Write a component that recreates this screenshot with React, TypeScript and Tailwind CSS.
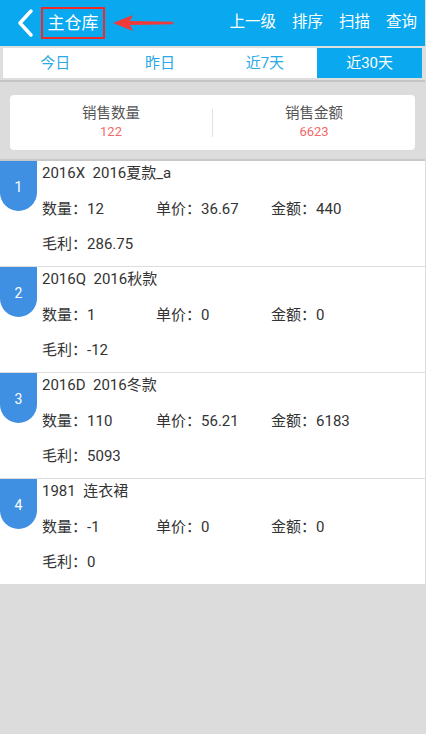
import React from "react";

const items = [
  { n: "1", title: "2016X  2016夏款_a", qty: "12", price: "36.67", amt: "440", profit: "286.75" },
  { n: "2", title: "2016Q  2016秋款", qty: "1", price: "0", amt: "0", profit: "-12" },
  { n: "3", title: "2016D  2016冬款", qty: "110", price: "56.21", amt: "6183", profit: "5093" },
  { n: "4", title: "1981  连衣裙", qty: "-1", price: "0", amt: "0", profit: "0" },
];

const font = { fontFamily: 'Roboto, "Noto Sans CJK SC", sans-serif' };

export default function App() {
  return (
    <div className="w-[426px] h-[734px] bg-[#dcdcdc] overflow-hidden" style={font}>
      <div className="w-[425px] h-full bg-[#dcdcdc] flex flex-col">
        {/* Header */}
        <div className="h-[46px] bg-[#0aa8ee] flex items-center relative">
          <svg width="20" height="30" viewBox="0 0 20 30" className="ml-[15px]">
            <polyline points="16,3 5,15 16,27" fill="none" stroke="white" strokeWidth="3.5" strokeLinecap="round" strokeLinejoin="round" />
          </svg>
          <div className="ml-[6px] w-[64px] h-[32px] border-2 border-[#ee2b2b] flex items-center justify-center text-white text-[17px] leading-none">
            主仓库
          </div>
          <svg width="62" height="18" viewBox="0 0 62 18" className="ml-[8px]">
            <polygon points="0,9 20,1 17,7 60,7.8 60,10.2 17,11 20,17" fill="#f03a3a" />
          </svg>
          <div className="ml-auto mr-[8px] flex items-center gap-[16px] text-white text-[15.5px]">
            <span>上一级</span>
            <span>排序</span>
            <span>扫描</span>
            <span>查询</span>
          </div>
        </div>
        {/* Tabs */}
        <div className="pt-[2px] pb-[2px] px-[3px] bg-[#dedede] border-b-2 border-[#c4c4c4]">
          <div className="h-[30px] bg-white grid grid-cols-4 text-[15px] text-[#2aa9e6]">
            <div className="flex items-center justify-center">今日</div>
            <div className="flex items-center justify-center">昨日</div>
            <div className="flex items-center justify-center">近7天</div>
            <div className="flex items-center justify-center bg-[#0aa8ee] text-white">近30天</div>
          </div>
        </div>
        {/* Summary */}
        <div className="px-[10px] pt-[13px] pb-[9px] border-b-2 border-[#c8c8c8]">
          <div className="h-[55px] bg-white rounded-[4px] flex items-center">
            <div className="flex-1 flex flex-col items-center">
              <span className="text-[14.5px] text-[#555] leading-[18px]">销售数量</span>
              <span className="text-[13px] text-[#f26a6a] leading-[17px]">122</span>
            </div>
            <div className="w-px h-[28px] bg-[#e2e2e2]" />
            <div className="flex-1 flex flex-col items-center">
              <span className="text-[14.5px] text-[#555] leading-[18px]">销售金额</span>
              <span className="text-[13px] text-[#f26a6a] leading-[17px]">6623</span>
            </div>
          </div>
        </div>
        {/* List */}
        <div className="bg-white">
          {items.map((it) => (
            <div key={it.n} className="relative h-[106px] border-b border-[#dddddd] text-[15px] text-[#333]">
              <div className="absolute left-0 top-0 w-[37px] h-[50px] bg-[#3f8fe2] rounded-b-[19px] flex items-center justify-center text-white text-[14px] pt-[2px]">
                {it.n}
              </div>
              <div className="pl-[42px]">
                <div className="h-[24px] flex items-center whitespace-pre">{it.title}</div>
                <div className="mt-[6px] h-[36px] flex items-center">
                  <span className="w-[114px]">数量：{it.qty}</span>
                  <span className="w-[115px]">单价：{it.price}</span>
                  <span>金额：{it.amt}</span>
                </div>
                <div className="h-[34px] flex items-center">毛利：{it.profit}</div>
              </div>
            </div>
          ))}
        </div>
      </div>
    </div>
  );
}
